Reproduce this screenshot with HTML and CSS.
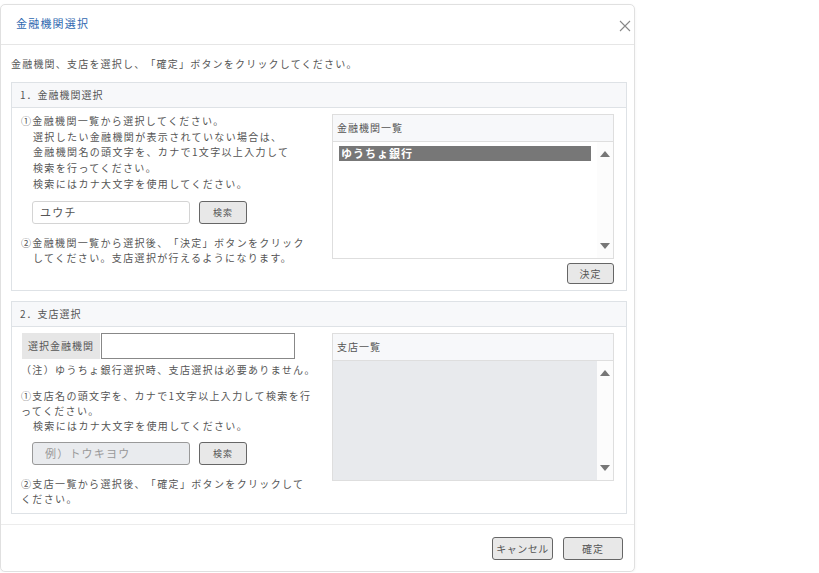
FILE: index.html
```html
<!DOCTYPE html>
<html lang="ja">
<head>
    <meta charset="UTF-8">
    <title>金融機関選択</title>
    <link rel="stylesheet" href="styles.css">
</head>
<body>

    <div class="modal">
        <div class="modal-header">
            <span class="modal-title">金融機関選択</span>
            <span class="close">
                <svg width="12" height="12" viewBox="0 0 12 12"><path d="M1 1L11 11M11 1L1 11" stroke="#888" stroke-width="1.1" fill="none"/></svg>
            </span>
        </div>

        <div class="modal-body">
            <p class="lead">金融機関、支店を選択し、「確定」ボタンをクリックしてください。</p>

            <!-- 1. 金融機関 -->
            <div class="panel">
                <div class="panel-head">1．金融機関選択</div>
                <div class="panel-body">
                    <div class="left">
                        <div class="note first">①金融機関一覧から選択してください。</div>
                        <div class="note indent">
                            選択したい金融機関が表示されていない場合は、<br>
                            金融機関名の頭文字を、カナで1文字以上入力して<br>
                            検索を行ってください。<br>
                            検索にはカナ大文字を使用してください。
                        </div>
                        <div class="search-row">
                            <input type="text" class="search-input" value="ユウチ">
                            <button class="btn btn-search">検索</button>
                        </div>
                        <div class="note hang">②金融機関一覧から選択後、「決定」ボタンをクリック<br>してください。支店選択が行えるようになります。</div>
                    </div>
                    <div class="right">
                        <div class="list">
                            <div class="list-head">金融機関一覧</div>
                            <div class="list-body">
                                <div class="list-items">
                                    <div class="item selected">ゆうちょ銀行</div>
                                </div>
                                <div class="scroll">
                                    <span class="arrow up"></span>
                                    <span class="arrow down"></span>
                                </div>
                            </div>
                        </div>
                        <div class="actions">
                            <button class="btn btn-decide">決定</button>
                        </div>
                    </div>
                </div>
            </div>

            <!-- 2. 支店 -->
            <div class="panel">
                <div class="panel-head">2．支店選択</div>
                <div class="panel-body">
                    <div class="left">
                        <div class="bank-row">
                            <span class="bank-label">選択金融機関</span>
                            <input type="text" class="bank-input" disabled>
                        </div>
                        <div class="note caution">（注）ゆうちょ銀行選択時、支店選択は必要ありません。</div>
                        <div class="note tight">①支店名の頭文字を、カナで1文字以上入力して検索を行<br>ってください。</div>
                        <div class="note tight indent">検索にはカナ大文字を使用してください。</div>
                        <div class="search-row">
                            <input type="text" class="search-input gray" placeholder="例）トウキヨウ">
                            <button class="btn btn-search">検索</button>
                        </div>
                        <div class="note">②支店一覧から選択後、「確定」ボタンをクリックして<br>ください。</div>
                    </div>
                    <div class="right">
                        <div class="list branch">
                            <div class="list-head">支店一覧</div>
                            <div class="list-body">
                                <div class="list-items"></div>
                                <div class="scroll">
                                    <span class="arrow up"></span>
                                    <span class="arrow down"></span>
                                </div>
                            </div>
                        </div>
                    </div>
                </div>
            </div>
        </div>

        <div class="modal-footer">
            <button class="btn btn-cancel">キャンセル</button>
            <button class="btn btn-ok">確定</button>
        </div>
    </div>

</body>
</html>
```

FILE: styles.css
```css
body {
    margin: 0;
    background-color: #fff;
    font-family: "Noto Sans CJK JP", "Noto Sans", sans-serif;
    color: #555;
    text-spacing-trim: space-all;
}

.modal {
    width: 633px;
    margin-top: 4px;
    border: 1px solid #e0e0e0;
    border-radius: 5px;
    background-color: #fff;
    box-shadow: 0 1px 3px rgba(0, 0, 0, 0.06);
}

.modal-header {
    display: flex;
    justify-content: space-between;
    align-items: center;
    height: 39px;
    padding: 0 3px 0 15px;
    border-bottom: 1px solid #e6e6e6;
}

.modal-title {
    font-size: 11px;
    letter-spacing: 1.2px;
    color: #2f68b0;
    margin-top: -4px;
}

.close {
    display: flex;
    padding-top: 2px;
}

.modal-body {
    padding: 11px 7px 10px 10px;
}

.lead {
    margin: 0 0 10px 0;
    font-size: 10px;
    line-height: 16px;
    letter-spacing: 1.2px;
}

.panel {
    border: 1px solid #dee2e6;
    margin-bottom: 10px;
}

.panel:last-child {
    margin-bottom: 0;
}

.panel-head {
    height: 24px;
    line-height: 24px;
    padding-left: 8px;
    font-size: 10px;
    letter-spacing: 1px;
    background-color: #f7f8fa;
    border-bottom: 1px solid #dee2e6;
}

.panel-body {
    display: grid;
    grid-template-columns: 291px 282px;
    column-gap: 20px;
    padding: 6px 11px 6px 9px;
}

.note {
    font-size: 10px;
    line-height: 15.7px;
    letter-spacing: 1.35px;
    white-space: nowrap;
}

.note.first {
    margin-top: -1px;
}

.note.indent {
    padding-left: 12px;
}

.note.hang {
    padding-left: 12px;
    text-indent: -12px;
}

.note.caution {
    margin-top: 3px;
}

.note.tight {
    line-height: 15px;
}

.caution + .tight {
    margin-top: 10px;
}

.search-row {
    display: flex;
    align-items: center;
    gap: 9px;
    margin: 9px 0 11px 11px;
}

.search-input {
    width: 158px;
    height: 23px;
    box-sizing: border-box;
    padding: 0 7px;
    border: 1px solid #d4d4d4;
    border-radius: 3px;
    font-family: inherit;
    font-size: 11px;
    letter-spacing: 1.2px;
    color: #555;
}

.search-input.gray {
    background-color: #e9ebee;
    border-color: #999;
    padding-left: 12px;
}

.search-input.gray::placeholder {
    color: #999;
}

.btn {
    box-sizing: border-box;
    height: 23px;
    border: 1px solid #666;
    border-radius: 3px;
    background-color: #e8e8e8;
    font-family: inherit;
    font-size: 9px;
    letter-spacing: 1px;
    color: #555;
    cursor: pointer;
    padding: 0;
}

.btn-search {
    width: 48px;
}

.right {
    display: flex;
    flex-direction: column;
}

.list {
    border: 1px solid #dedede;
}

.list-head {
    height: 26px;
    line-height: 26px;
    padding-left: 4px;
    font-size: 10px;
    letter-spacing: 1px;
    background-color: #f7f8fa;
    border-bottom: 1px solid #dedede;
}

.list-body {
    display: flex;
    height: 116px;
}

.list-items {
    flex: 1;
    padding: 4px 6px;
}

.branch .list-body {
    height: 119px;
}

.branch .list-items {
    background-color: #e8eaed;
}

.item {
    height: 15px;
    line-height: 15px;
    padding-left: 2px;
    font-size: 11px;
    font-weight: bold;
    letter-spacing: 1px;
}

.item.selected {
    background-color: #777;
    color: #fff;
}

.scroll {
    width: 16px;
    display: flex;
    flex-direction: column;
    justify-content: space-between;
    align-items: center;
    padding: 9px 0 9px;
    background-color: #fcfcfc;
}

.arrow {
    width: 0;
    height: 0;
    border-left: 5px solid transparent;
    border-right: 5px solid transparent;
}

.arrow.up {
    border-bottom: 6px solid #777;
}

.arrow.down {
    border-top: 6px solid #777;
}

.actions {
    display: flex;
    justify-content: flex-end;
    margin-top: 4px;
}

.btn-decide {
    width: 47px;
    height: 21px;
    font-size: 10px;
}

.bank-row {
    display: flex;
    margin-left: 1px;
}

.bank-label {
    width: 78px;
    height: 26px;
    line-height: 26px;
    text-align: center;
    font-size: 10px;
    letter-spacing: 1px;
    background-color: #e6e6e6;
    color: #555;
}

.bank-input {
    width: 194px;
    height: 26px;
    box-sizing: border-box;
    margin-left: 1px;
    border: 1px solid #888;
    background-color: #fff;
}

.modal-footer {
    display: flex;
    justify-content: flex-end;
    gap: 10px;
    padding: 12px 11px 11px;
    border-top: 1px solid #ececec;
}

.btn-cancel {
    width: 61px;
    font-size: 10px;
    letter-spacing: 0.5px;
}

.btn-ok {
    width: 60px;
    font-size: 10px;
}
```
